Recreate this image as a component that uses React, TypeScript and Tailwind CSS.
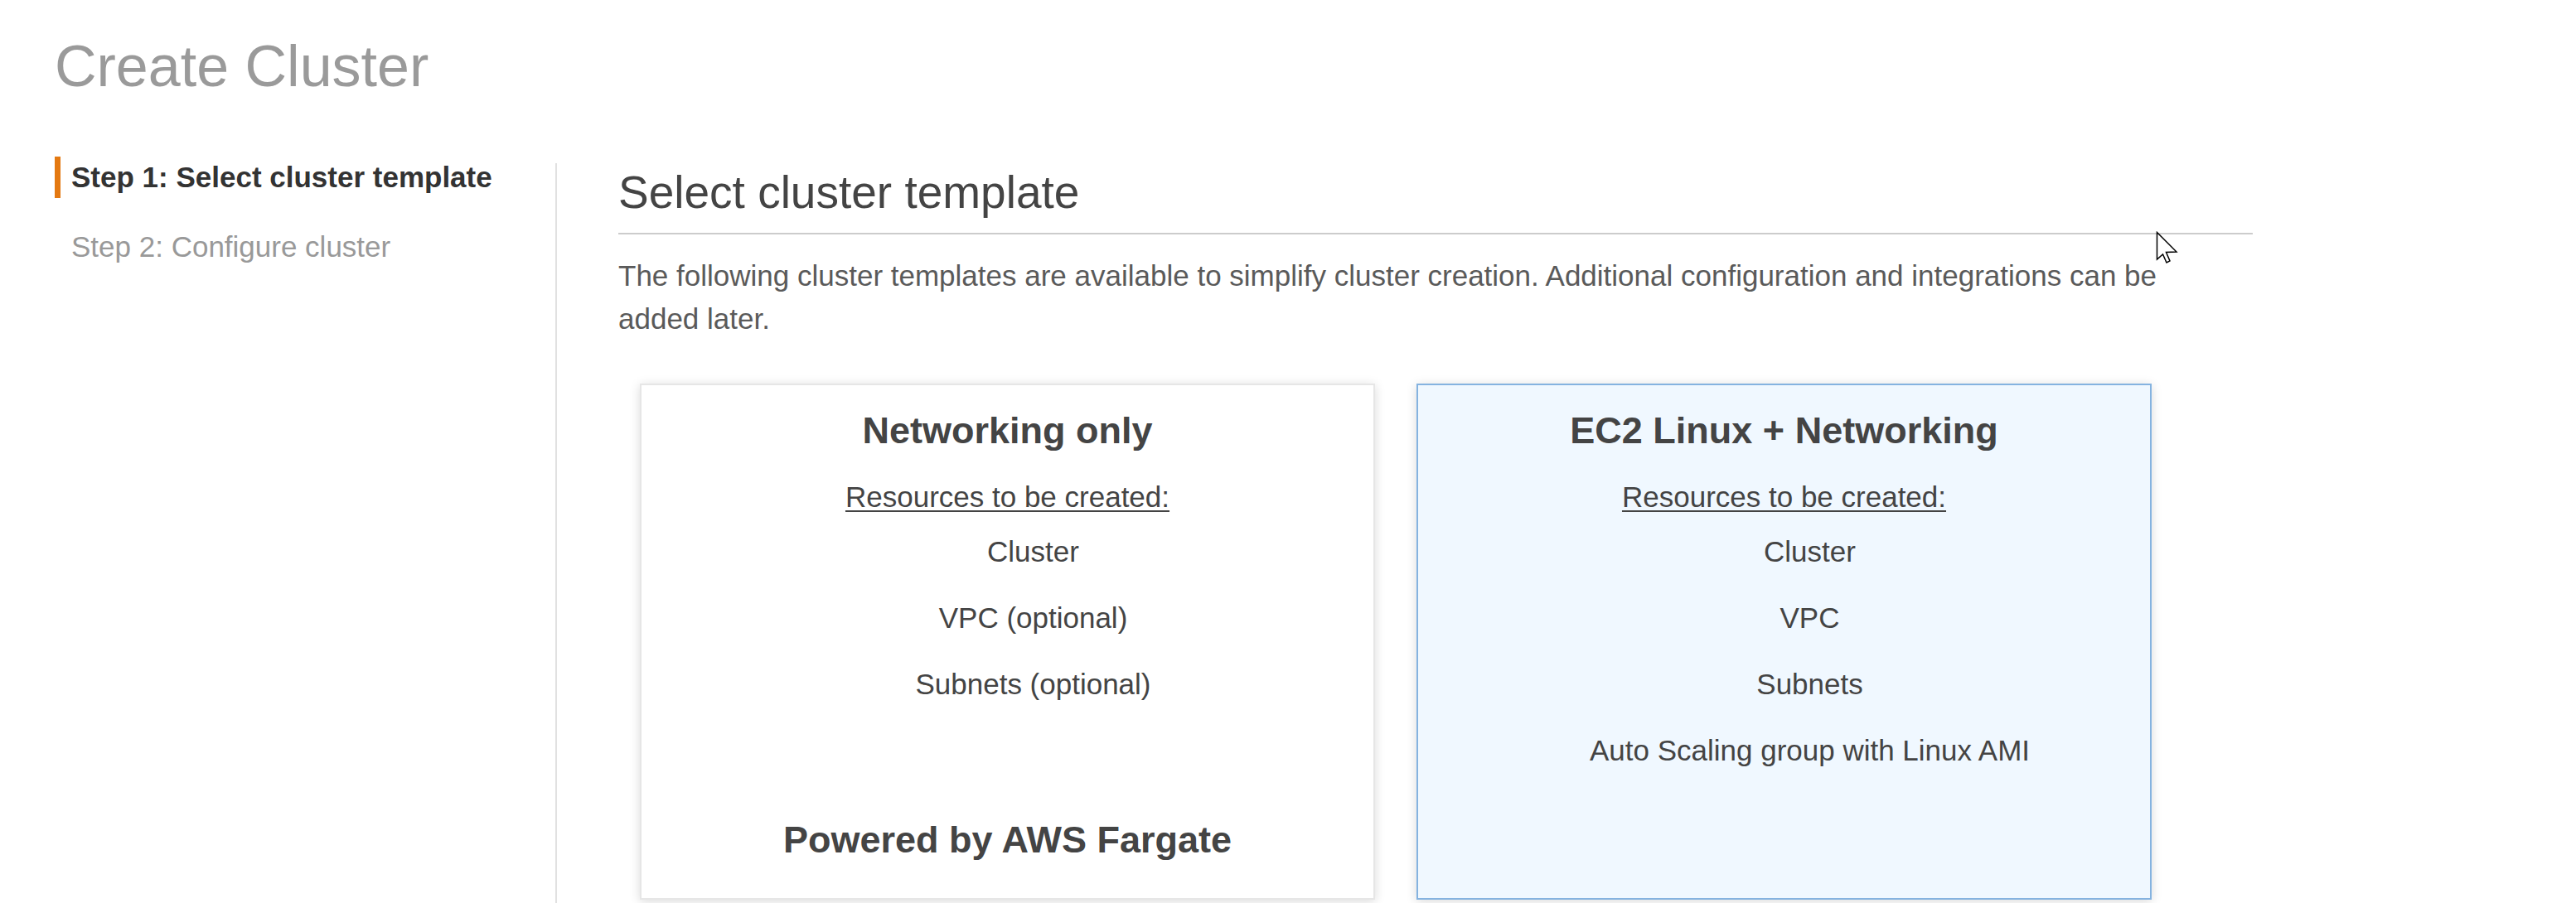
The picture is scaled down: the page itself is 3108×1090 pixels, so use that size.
import React from "react";

type Template = {
  title: string;
  resources: string[];
  footer?: string;
  selected?: boolean;
};

const templates: Template[] = [
  {
    title: "Networking only",
    resources: ["Cluster", "VPC (optional)", "Subnets (optional)"],
    footer: "Powered by AWS Fargate",
  },
  {
    title: "EC2 Linux + Networking",
    resources: ["Cluster", "VPC", "Subnets", "Auto Scaling group with Linux AMI"],
    selected: true,
  },
];

function TemplateCard({ template }: { template: Template }) {
  return (
    <div
      className={
        "flex h-[623px] w-[887px] flex-col border-2 text-center text-[#444] shadow-[0_2px_12px_rgba(0,0,0,0.15)] " +
        (template.selected ? "border-[#85b3e0] bg-[#f0f8ff]" : "border-[#e6e6e6] bg-white")
      }
    >
      <h3 className="pt-[30px] text-[45px] font-bold leading-[50px]">{template.title}</h3>
      <p className="mt-[29px] text-[35px] leading-[52px] underline decoration-2 underline-offset-[4px]">
        Resources to be created:
      </p>
      <ul className="pl-[62px] text-[35px] leading-[80px]">
        {template.resources.map((r) => (
          <li key={r}>{r}</li>
        ))}
      </ul>
      {template.footer && (
        <p className="mt-auto pb-[45px] text-[45px] font-bold leading-[50px]">{template.footer}</p>
      )}
    </div>
  );
}

function Cursor() {
  return (
    <svg
      className="absolute left-[2601px] top-[279px]"
      width="27"
      height="40"
      viewBox="0 0 27 40"
    >
      <path
        d="M1.5 1.5 L1.5 34 L8.5 28 L13 38 L17 36 L12.5 25.5 L25 25 Z"
        fill="#fff"
        stroke="#000"
        strokeWidth="1.5"
        strokeLinejoin="miter"
      />
    </svg>
  );
}

export default function App() {
  return (
    <div className="relative flex h-[1090px] w-[3108px] flex-col overflow-hidden bg-white font-['Liberation_Sans',Arial,sans-serif]">
      <h1 className="pl-[66px] pt-[40px] text-[70px] leading-[80px] text-[#9a9a9a]">Create Cluster</h1>

      <div className="mt-[69px] flex flex-1">
        <nav className="w-[670px] shrink-0 pl-[66px]">
          <div className="border-l-[7px] border-[#e47911] pl-[13px] text-[35px] font-bold leading-[50px] text-[#333]">
            Step 1: Select cluster template
          </div>
          <div className="mt-[34px] border-l-[7px] border-transparent pl-[13px] text-[35px] leading-[50px] text-[#999]">
            Step 2: Configure cluster
          </div>
        </nav>

        <main className="mt-[8px] border-l-2 border-[#e1e1e1] pl-[74px] pt-[3px]">
          <h2 className="w-[1972px] border-b-2 border-[#cccccc] pb-[17px] text-[55px] leading-[64px] text-[#444]">
            Select cluster template
          </h2>
          <p className="mt-[24px] w-[1900px] text-[35px] leading-[52px] text-[#5a5a5a]">
            The following cluster templates are available to simplify cluster creation. Additional configuration and
            integrations can be added later.
          </p>
          <div className="mt-[52px] flex gap-[50px] pl-[26px]">
            {templates.map((t) => (
              <TemplateCard key={t.title} template={t} />
            ))}
          </div>
        </main>
      </div>

      <Cursor />
    </div>
  );
}
